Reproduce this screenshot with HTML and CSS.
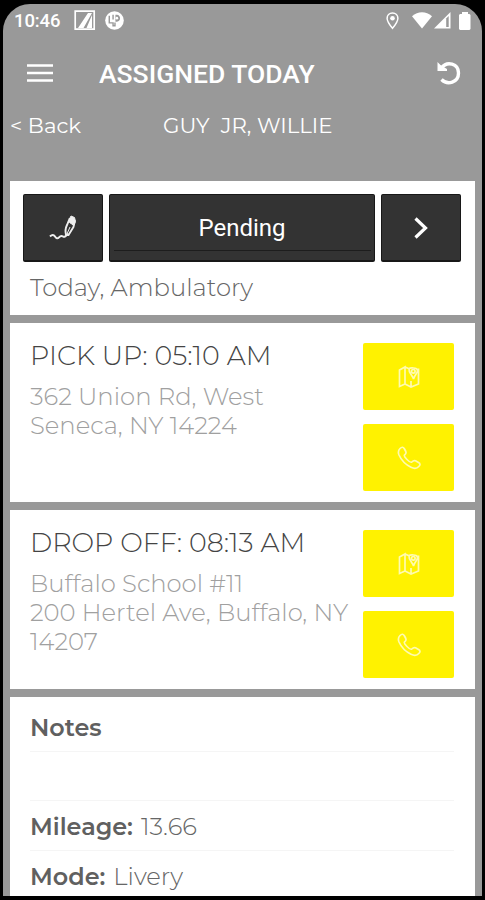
FILE: index.html
```html
<!DOCTYPE html>
<html lang="en">
<head>
<meta charset="utf-8">
<title>Assigned Today</title>
<link rel="stylesheet" href="styles.css">
</head>
<body>
<svg class="defs" width="0" height="0" aria-hidden="true">
  <symbol id="map" viewBox="0 0 24 24"><path d="M2.500 5 8 2v17l-5.500 2.500zM8 2l4 1.800M8 19l6 3 7.500-3V3.500M14 22v-6M12 3.800C13 2.500 20 2.500 20.500 5c.5 3-3 5-4 9-1-4-5-6-4.500-10.200z"/><circle cx="16.300" cy="6.300" r="1.800"/></symbol>
  <symbol id="phone" viewBox="0 0 24 24"><path d="M3 2.500C5 .5 6.500 1 7.500 3l1.300 2.500c.8 1.700-.2 2.500-1.300 3.500-.8.800 1 3 2.500 4.500s4 3.300 4.800 2.500c1.200-1.200 2-2 3.700-1.200l3 1.700c1.800 1 2 2.300.3 4-2 2.300-4.300 2.500-7.800.8C8.500 18.500 4 13.500 2 9 .8 6 1.200 4.300 3 2.500z"/></symbol>
</svg>
<div class="screen">
  <header>
    <div class="status">
      <span class="clock">10:46</span>
      <svg class="app" width="22" height="21" viewBox="0 0 22 21"><path d="M1.200 1.200h19v18h-19z" fill="none" stroke="#fff" stroke-width="1.700"/><path d="M4 18 14 3h4L9.500 18zM12.500 18 18 5v13z" fill="#fff"/></svg>
      <svg class="app2" width="19" height="19" viewBox="0 0 20 20"><circle cx="10" cy="10" r="9.800" fill="#fff"/><path d="M4.500 5v7.500h4v3h2V12M8.500 4v5" stroke="#999" stroke-width="1.500" fill="none"/><path d="M11 4h1.500c4.500.3 4.500 7 0 7.300H11z" fill="#999"/><circle cx="12.500" cy="7.500" r="1.400" fill="#fff"/></svg>
      <svg class="pin" width="13" height="18" viewBox="0 0 13 18"><path d="M6.500 1C3.300 1 1.100 3.300 1.100 6.300c0 3.700 5.400 10 5.400 10s5.400-6.300 5.400-10C11.900 3.300 9.700 1 6.500 1z" fill="none" stroke="#fff" stroke-width="1.500"/><circle cx="6.500" cy="6.300" r="2.300" fill="#fff"/></svg>
      <svg class="wifi" width="20" height="17" viewBox="0 0 20 17"><path d="M0 4.200C6-1 14-1 20 4.200L10 16.500z" fill="#fff"/></svg>
      <svg class="signal" width="17" height="17" viewBox="0 0 17 17"><path d="M0 16.500 16.500 0v16.500z" fill="#fff"/><path d="M12.200 6.500v8.500h2.500V4z" fill="#999"/></svg>
      <svg class="battery" width="12" height="18" viewBox="0 0 12 18"><path d="M3 0h6v2h1.500l1 1v14l-1 1h-9.500l-1-1V3l1-1H3z" fill="#fff"/></svg>
    </div>
    <div class="appbar">
      <svg class="menu" width="26" height="18" viewBox="0 0 26 18"><path d="M0 1.500h26M0 9h26M0 16.500h26" stroke="#fff" stroke-width="2.700"/></svg>
      <h1>ASSIGNED TODAY</h1>
      <svg class="undo" width="24" height="24" viewBox="0 0 24 24"><path d="M4.500 7C10-.5 21.500 2.500 21.500 12c0 9.500-11 12.500-17 6.500" fill="none" stroke="#fff" stroke-width="3.400"/><path d="M.5 1v9h9.500V8L3.500 4z" fill="#fff"/></svg>
    </div>
    <div class="subbar"><span class="back">&lt; Back</span><span class="name">GUY&nbsp; JR, WILLIE</span></div>
  </header>
  <main>
    <section class="card trip">
      <div class="actions">
        <button class="dark"><svg width="28" height="26" viewBox="0 0 28 26"><path d="M1 21.500q3-3 5 0t4 .8 4-.8 5-3" fill="none" stroke="#eee" stroke-width="2"/><path d="M17 20c-1-4-.5-7 1-10l2.500-6 5 2-1 6-5 8z" fill="none" stroke="#eee" stroke-width="1.900"/><path d="M20.500 4 22 1l3.500 1.500 1 4-1.500 4-4.500-3zM17.500 20l3.500-8" stroke="#eee" fill="#eee"/></svg></button>
        <button class="dark pending"><span>Pending</span></button>
        <button class="dark"><svg width="16" height="24" viewBox="0 0 16 24"><path d="m2.500 2.500 10 9.500-10 9.500" fill="none" stroke="#fff" stroke-width="3.200"/></svg></button>
      </div>
      <p class="type">Today, Ambulatory</p>
    </section>
    <section class="card stop">
      <div class="info">
        <h2>PICK UP: 05:10 AM</h2>
        <p>362 Union Rd, West</p><p>Seneca, NY 14224</p>
      </div>
      <div class="side"><button><svg width="24" height="24"><use href="#map"/></svg></button><button><svg width="24" height="24"><use href="#phone"/></svg></button></div>
    </section>
    <section class="card stop">
      <div class="info">
        <h2>DROP OFF: 08:13 AM</h2>
        <p>Buffalo School #11</p><p>200 Hertel Ave, Buffalo, NY</p><p>14207</p>
      </div>
      <div class="side"><button><svg width="24" height="24"><use href="#map"/></svg></button><button><svg width="24" height="24"><use href="#phone"/></svg></button></div>
    </section>
    <section class="card details">
      <div class="row"><b>Notes</b></div>
      <div class="row"></div>
      <div class="row"><b>Mileage:</b><span>13.66</span></div>
      <div class="row"><b>Mode:</b><span>Livery</span></div>
    </section>
  </main>
</div>
</body>
</html>
```
FILE: styles.css
```css
* { box-sizing: border-box; }
body, h1, h2, p { margin: 0; }
body {
  height: 900px;
  padding: 4px 3px;
  overflow: hidden;
  background: #000;
  font-family: Montserrat, Inter, sans-serif;
  font-weight: 300;
  font-size: 24.300px;
}
.defs { display: block; position: absolute; }
svg { display: block; flex: none; }
.screen {
  height: 892px;
  overflow: hidden;
  border-radius: 27px 27px 0 0;
  background: #999;
}
header { height: 177px; color: #fff; }
.status { display: flex; align-items: center; height: 33px; padding: 0 11px 0 11px; }
.clock { width: 60px; font: 500 18.500px/34px Roboto, sans-serif; letter-spacing: -.1px; }
.app2 { margin-left: 9px; }
.pin { margin-left: auto; margin-right: 13px; }
.signal { margin: 0 8px 0 2px; }
.appbar { display: flex; align-items: center; height: 71px; padding: 0 21px 0 24px; }
h1 { margin-left: 46px; padding-top: 2px; font: 500 26.500px/70px Roboto, sans-serif; }
.undo { margin-left: auto; }
.subbar { display: flex; height: 36px; line-height: 34px; font-size: 21.300px; font-weight: 400; padding-left: 7px; }
.back { width: 153px; }
.name, .back { white-space: nowrap; }
main { display: grid; gap: 8px; padding: 0 7px; }
.card { background: #fff; color: #666; }
.trip { height: 134px; padding: 13px 14px 0 13px; }
.actions { display: grid; grid-template-columns: 80px 266px 80px; gap: 6px; }
button { display: flex; align-items: center; justify-content: center; padding: 0; border: 0; border-radius: 2px; }
.dark { height: 68px; border: 1px solid #181818; border-bottom-width: 2px; background: #333; color: #fff; }
.pending { align-items: flex-start; font: 400 24px/66px Roboto, sans-serif; }
.pending span { width: 257px; height: 56px; border-bottom: 1px solid #1d1d1d; }
.type { margin: 8px 0 0 7px; line-height: 34px; }
.stop { display: flex; justify-content: space-between; height: 179px; padding: 20px 21px 0 20px; }
.info { width: 320px; flex: none; margin-right: -4px; white-space: nowrap; }
h2 { margin: -5px 0 9px; font-size: 26.900px; line-height: 35px; font-weight: 300; color: #444; }
.info p { height: 29px; line-height: 29px; color: #a0a0a0; }
.side { display: grid; gap: 14px; height: 148px; }
.side button { width: 91px; height: 67px; background: #fff200; }
.side svg { fill: none; stroke: #fffbb0; stroke-width: 1.700; }
.details { height: 199px; padding: 5px 21px 0 20px; }
.row { display: flex; height: 49.500px; border-bottom: 1px solid #f5f5f5; line-height: 51px; white-space: nowrap; }
.row:last-child { border: 0; }
.row b { font-size: 23.900px; font-weight: 600; color: #606060; margin-right: 8px; }
```
